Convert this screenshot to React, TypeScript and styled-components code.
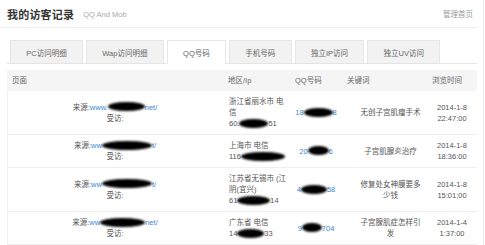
import React from "react";
import styled, { createGlobalStyle } from "styled-components";

const Global = createGlobalStyle`
  html, body { margin: 0; padding: 0; background: #fff; }
  body { font-family: "Liberation Sans", "Noto Sans CJK SC", sans-serif; font-size: 7.5px; color: #555; }
`;

const Page = styled.div`
  width: 483px;
  height: 245px;
  border-right: 1px solid #ececec;
  overflow: hidden;
`;

const Header = styled.div`
  width: 470px;
  height: 27px;
  padding-left: 7px;
  border-bottom: 1px solid #eeeeee;
  display: flex;
  align-items: center;
  box-sizing: content-box;
`;

const Title = styled.h1`
  margin: 0;
  font-size: 11px;
  font-weight: bold;
  color: #333;
  letter-spacing: 0.2px;
`;

const Sub = styled.span`
  margin-left: 9px;
  font-size: 7.5px;
  color: #aaa;
  margin-top: 1px;
`;

const HeaderLink = styled.a`
  margin-left: auto;
  margin-right: 4px;
  color: #999;
  text-decoration: none;
  font-size: 7.5px;
`;

const Body = styled.div`
  margin-left: 7px;
  width: 470px;
`;

const TabBar = styled.div`
  margin-top: 12px;
  height: 23px;
  padding-left: 3px;
  display: flex;
  gap: 3px;
  border-bottom: 1px solid #e4e4e4;
`;

const Tab = styled.div<{ $active?: boolean }>`
  height: ${(p) => (p.$active ? 24 : 23)}px;
  box-sizing: border-box;
  padding: 0 15.3px;
  display: flex;
  align-items: center;
  justify-content: center;
  border: 1px solid #e6e6e6;
  border-bottom: ${(p) => (p.$active ? "1px solid #fff" : "none")};
  background: ${(p) => (p.$active ? "#fff" : "#f2f2f2")};
  color: #666;
  white-space: nowrap;
`;

const Grid = styled.div`
  margin-top: 6px;
  display: grid;
  grid-template-columns: 215px 68px 52px 85px 50px;
`;

const Th = styled.div<{ $pl?: number }>`
  background: #f5f5f5;
  height: 21px;
  line-height: 21px;
  padding-left: ${(p) => p.$pl ?? 5}px;
  color: #666;
  white-space: nowrap;
`;

type Align = "left" | "center";

const Td = styled.div<{ $align?: Align; $pl?: number; $pr?: number; $first?: boolean }>`
  display: flex;
  flex-direction: column;
  justify-content: center;
  align-items: ${(p) => (p.$align === "left" ? "flex-start" : "center")};
  text-align: ${(p) => p.$align ?? "center"};
  padding: 5px ${(p) => p.$pr ?? 0}px 5px ${(p) => p.$pl ?? 0}px;
  line-height: 11px;
  border-bottom: 1px solid #eeeeee;
  ${(p) => (p.$first ? "border-left: 1px solid #f0f0f0;" : "")}
  color: #555;
  min-width: 0;
`;

const Line = styled.div`
  white-space: nowrap;
`;

const Link = styled.span`
  color: #3b88d4;
`;

const Blob = styled.span<{ $w: number }>`
  display: inline-block;
  width: ${(p) => p.$w}px;
  height: 9px;
  background: #000;
  border-radius: 50%;
  filter: blur(0.9px);
  vertical-align: -1.5px;
`;

const Wrap = styled.div`
  width: 100%;
  word-break: break-all;
`;

type Row = {
  url: [string, number, string];
  region: string;
  ip: [string, number, string];
  qq: [string, number, string];
  kw: string;
  date: string;
  time: string;
};

const rows: Row[] = [
  {
    url: ["www.", 37, "net/"],
    region: "浙江省丽水市 电信",
    ip: ["60.", 29, "51"],
    qq: ["18", 29, "8"],
    kw: "无创子宫肌瘤手术",
    date: "2014-1-8",
    time: "22:47:00",
  },
  {
    url: ["ww", 50, "t/"],
    region: "上海市 电信",
    ip: ["116", 44, ""],
    qq: ["20", 21, "6"],
    kw: "子宫肌腺炎治疗",
    date: "2014-1-8",
    time: "18:36:00",
  },
  {
    url: ["ww", 50, "t/"],
    region: "江苏省无锡市 (江阴(宜兴)",
    ip: ["61", 33, "14"],
    qq: ["4", 26, "58"],
    kw: "修复处女神膜要多少钱",
    date: "2014-1-8",
    time: "15:01:00",
  },
  {
    url: ["ww", 45, "net/"],
    region: "广东省 电信",
    ip: ["14", 27, "33"],
    qq: ["9", 20, "704"],
    kw: "子宫腺肌症怎样引发",
    date: "2014-1-4",
    time: "1:37:00",
  },
];

const tabs = ["PC访问明细", "Wap访问明细", "QQ号码", "手机号码", "独立IP访问", "独立UV访问"];

export default function App() {
  return (
    <>
      <Global />
      <Page>
        <Header>
          <Title>我的访客记录</Title>
          <Sub>QQ And Mob</Sub>
          <HeaderLink>管理首页</HeaderLink>
        </Header>
        <Body>
          <TabBar>
            {tabs.map((t) => (
              <Tab key={t} $active={t === "QQ号码"}>
                {t}
              </Tab>
            ))}
          </TabBar>
          <Grid>
            <Th>页面</Th>
            <Th $pl={6}>地区/Ip</Th>
            <Th>QQ号码</Th>
            <Th>关键词</Th>
            <Th>浏览时间</Th>
            {rows.map((r, i) => (
              <React.Fragment key={i}>
                <Td $first>
                  <Line>
                    来源:
                    <Link>
                      {r.url[0]}
                      <Blob $w={r.url[1]} />
                      {r.url[2]}
                    </Link>
                  </Line>
                  <Line>受访:</Line>
                </Td>
                <Td $align="left" $pl={7} $pr={3}>
                  <Wrap>{r.region}</Wrap>
                  <Line>
                    {r.ip[0]}
                    <Blob $w={r.ip[1]} />
                    {r.ip[2]}
                  </Line>
                </Td>
                <Td>
                  <Line>
                    <Link>
                      {r.qq[0]}
                      <Blob $w={r.qq[1]} />
                      {r.qq[2]}
                    </Link>
                  </Line>
                </Td>
                <Td $pl={18} $pr={6}>
                  <Wrap>{r.kw}</Wrap>
                </Td>
                <Td>
                  <Line>{r.date}</Line>
                  <Line>{r.time}</Line>
                </Td>
              </React.Fragment>
            ))}
          </Grid>
        </Body>
      </Page>
    </>
  );
}
